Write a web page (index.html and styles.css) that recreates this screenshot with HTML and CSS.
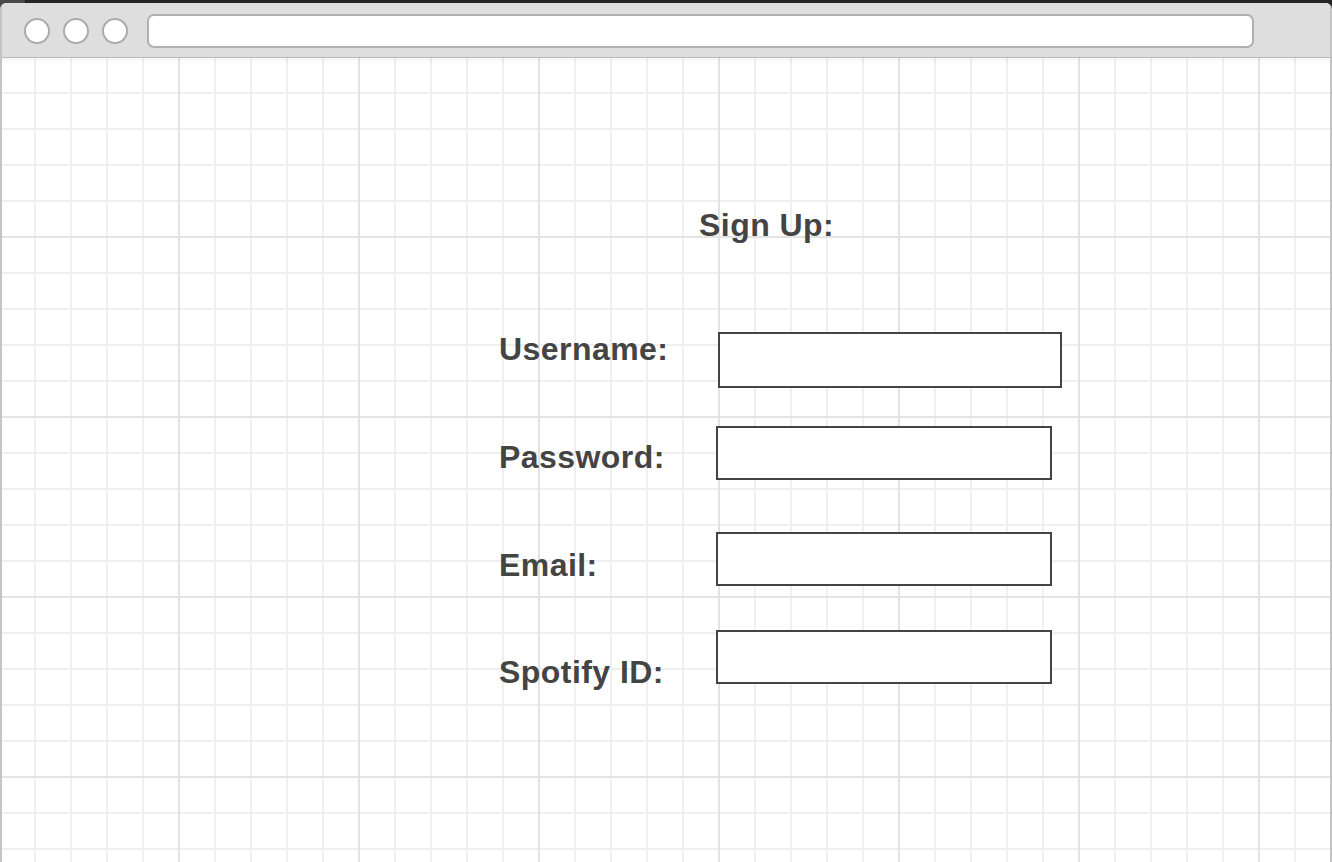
FILE: index.html
```html
<!DOCTYPE html>
<html lang="en">
<head>
<meta charset="utf-8">
<title>Sign Up</title>
<link rel="stylesheet" href="styles.css">
</head>
<body>
<div class="window">
  <div class="toolbar">
    <span class="dot"></span>
    <span class="dot"></span>
    <span class="dot"></span>
    <div class="url"></div>
  </div>
  <main class="canvas">
    <form class="signup">
      <h1 class="title">Sign Up:</h1>
      <div class="row row-user">
        <label class="label">Username:</label>
        <input class="field" type="text">
      </div>
      <div class="row row-pass">
        <label class="label">Password:</label>
        <input class="field" type="password">
      </div>
      <div class="row row-email">
        <label class="label">Email:</label>
        <input class="field" type="text">
      </div>
      <div class="row row-spotify">
        <label class="label">Spotify ID:</label>
        <input class="field" type="text">
      </div>
    </form>
  </main>
</div>
</body>
</html>
```

FILE: styles.css
```css
* { box-sizing: border-box; }

html, body {
  margin: 0;
  padding: 0;
  height: 100%;
  overflow: hidden;
}

body {
  background: linear-gradient(to right, #4a4a4a 0, #4a4a4a 25px, #1a1a1a 25px, #1a1a1a 26px, #262626 26px);
  font-family: "Liberation Sans", Arial, sans-serif;
}

.window {
  margin-top: 3px;
  height: calc(100% - 3px);
  border-left: 2px solid #c4c4c4;
  border-right: 2px solid #c4c4c4;
  border-radius: 6px 6px 0 0;
  overflow: hidden;
  background: #fff;
  display: flex;
  flex-direction: column;
}

.toolbar {
  height: 55px;
  flex: none;
  background: #dedede;
  border-bottom: 1px solid #b9b9b9;
  display: flex;
  align-items: center;
  padding: 2px 0 0 22px;
}

.dot {
  width: 26px;
  height: 26px;
  border-radius: 50%;
  background: #fff;
  border: 2px solid #ababab;
  margin-right: 13px;
  flex: none;
}

.dot:last-of-type { margin-right: 19px; }

.url {
  width: 1107px;
  height: 34px;
  background: #fff;
  border: 2px solid #b0b0b0;
  border-radius: 7px;
}

.canvas {
  flex: 1;
  background-color: #fff;
  background-image:
    linear-gradient(to bottom, rgba(0,0,0,0.035), rgba(0,0,0,0) 6px),
    linear-gradient(to right, #e3e3e3 0, #e3e3e3 2px, transparent 2px),
    linear-gradient(to bottom, #e3e3e3 0, #e3e3e3 2px, transparent 2px),
    linear-gradient(to right, #efefef 0, #efefef 2px, transparent 2px),
    linear-gradient(to bottom, #efefef 0, #efefef 2px, transparent 2px);
  background-size:
    100% 6px,
    180px 180px,
    180px 180px,
    36px 36px,
    36px 36px;
  background-repeat: no-repeat, repeat, repeat, repeat, repeat;
  background-position: 0 0, -4px -2px, -4px -2px, -4px -2px, -4px -2px;
}

.signup {
  padding: 151px 0 0 497px;
  display: flex;
  flex-direction: column;
  align-items: flex-start;
  color: #444;
  letter-spacing: 0.45px;
}

.title {
  margin: 0 0 0 200px;
  font-size: 32px;
  line-height: 32px;
  font-weight: bold;
}

.row {
  display: flex;
  align-items: flex-start;
}

.label {
  width: 217px;
  flex: none;
  font-size: 32px;
  line-height: 32px;
  font-weight: bold;
}

.field {
  display: block;
  margin: 0;
  padding: 0;
  background: #fff;
  border: 2px solid #444;
  border-radius: 0;
  outline: none;
  width: 336px;
  height: 54px;
}

.row-user { margin-top: 91px; }
.row-user .label { width: 219px; padding-top: 1px; }
.row-user .field { width: 344px; height: 56px; }

.row-pass { margin-top: 38px; }
.row-pass .label { padding-top: 15px; }

.row-email { margin-top: 52px; }
.row-email .label { padding-top: 17px; }

.row-spotify { margin-top: 44px; }
.row-spotify .label { padding-top: 26px; }
```
